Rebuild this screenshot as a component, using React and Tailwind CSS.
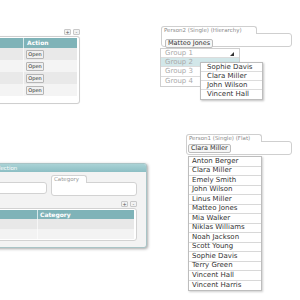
const font = { fontFamily: '"DejaVu Sans", Verdana, sans-serif' };

const people = [
  "Anton Berger",
  "Clara Miller",
  "Emely Smith",
  "John Wilson",
  "Linus Miller",
  "Matteo Jones",
  "Mia Walker",
  "Niklas Williams",
  "Noah Jackson",
  "Scott Young",
  "Sophie Davis",
  "Terry Green",
  "Vincent Hall",
  "Vincent Harris",
];

function PlusMinus() {
  return (
    <div className="flex justify-end gap-[2px]">
      <div className="flex h-[6px] w-[7px] items-center justify-center rounded-[1px] border border-[#c8c8c8] bg-[#f2f2f2] text-[5px] leading-none text-[#555]">
        +
      </div>
      <div className="flex h-[6px] w-[7px] items-center justify-center rounded-[1px] border border-[#c8c8c8] bg-[#f2f2f2] text-[5px] leading-none text-[#555]">
        -
      </div>
    </div>
  );
}

function Chip({ children }) {
  return (
    <div className="inline-flex h-[9px] items-center rounded-[2px] border border-[#bdbdbd] bg-[#f6f6f6] px-[2px] text-[6.5px] leading-none text-[#333]">
      {children}
    </div>
  );
}

function TabBox({ label, tabWidth, children }) {
  return (
    <div>
      <div
        className="relative z-10 -mb-px h-[8px] rounded-t-[3px] border border-b-0 border-[#cfcfcf] bg-white pl-[2px] text-[5.5px] leading-[7px] text-[#8a8a8a]"
        style={{ width: tabWidth }}
      >
        {label}
      </div>
      <div className="flex h-[14px] items-center rounded-b-[3px] rounded-tr-[3px] border border-[#cfcfcf] bg-white px-[1px]">
        {children}
      </div>
    </div>
  );
}

export default function App() {
  return (
    <div className="relative h-[300px] w-[300px] overflow-hidden bg-white" style={font}>
      {/* table with action column */}
      <div className="absolute left-[-40px] top-[29px] w-[120px]">
        <PlusMinus />
        <div className="mt-[1px] rounded-[3px] border border-[#cfcfcf] bg-white px-[2px] pb-[7px] pt-[1px] shadow-[0_0_1px_rgba(0,0,0,0.1)]">
          <div className="grid h-[10px] grid-cols-[61px_1fr] bg-[#7fb3b8] text-[6px] font-bold leading-[10px] text-white">
            <div className="border-r border-[#d6e8ea]" />
            <div className="pl-[3px]">Action</div>
          </div>
          {[0, 1, 2, 3].map((i) => (
            <div
              key={i}
              className={`grid h-[12px] grid-cols-[61px_1fr] items-center ${
                i % 2 === 0 ? "bg-[#e9e9e9]" : "bg-[#f4f4f4]"
              }`}
            >
              <div className="h-full border-r border-[#f8f8f8]" />
              <div className="pl-[2px]">
                <div className="flex h-[9px] w-[18px] items-center justify-center rounded-[1px] border border-[#b5b5b5] bg-[#f0f0f0] text-[5px] leading-none text-[#222]">
                  Open
                </div>
              </div>
            </div>
          ))}
        </div>
      </div>

      {/* hierarchy select */}
      <div className="absolute left-[161px] top-[26px] w-[131px]">
        <TabBox label="Person2 (Single) (Hierarchy)" tabWidth={96}>
          <div className="pl-[2px]">
            <Chip>Matteo Jones</Chip>
          </div>
        </TabBox>
      </div>
      <div className="absolute left-[160px] top-[48px] w-[80px] border border-[#cfcfcf] bg-white text-[7px] leading-none text-[#aaa]">
        {["Group 1", "Group 2", "Group 3", "Group 4"].map((g, i) => (
          <div
            key={g}
            className={`relative flex h-[9.2px] items-center border-b border-[#dcdcdc] pl-[4px] last:border-b-0 ${
              i === 1 ? "bg-[#d2e7e9]" : ""
            }`}
          >
            {g}
            {i === 0 && (
              <svg className="absolute right-[5px] top-[3px]" width="4" height="4" viewBox="0 0 4 4">
                <path d="M4 0V4H0Z" fill="#333" />
              </svg>
            )}
          </div>
        ))}
      </div>
      <div className="absolute left-[200px] top-[62px] w-[63px] border border-[#bdbdbd] bg-white text-[7px] leading-none text-[#333] shadow-[1px_1px_2px_rgba(0,0,0,0.25)]">
        {["Sophie Davis", "Clara Miller", "John Wilson", "Vincent Hall"].map((n) => (
          <div key={n} className="flex h-[9px] items-center border-b border-[#dcdcdc] pl-[6px] last:border-b-0">
            {n}
          </div>
        ))}
      </div>

      {/* selection window */}
      <div className="absolute left-[-60px] top-[163px] w-[207px] rounded-[3px] border border-[#a9c4c6] bg-[#f3f3f3] shadow-[1px_1px_3px_rgba(0,0,0,0.35)]">
        <div className="h-[8px] rounded-t-[2px] bg-gradient-to-b from-[#aad3d6] to-[#8dbfc4] pl-[51px] text-[5.5px] leading-[8px] text-white">
          Selection
        </div>
        <div className="pb-[6px] pl-[6px] pr-[9px] pt-[3px]">
          <div className="flex gap-[4px]">
            <div className="mt-[7px] h-[12px] flex-1 rounded-[3px] border border-[#d2d2d2] bg-white" />
            <div className="w-[86px]">
              <div className="relative z-10 -mb-px h-[8px] w-[36px] rounded-t-[3px] border border-b-0 border-[#d2d2d2] bg-white pl-[2px] text-[5.5px] leading-[7px] text-[#999]">
                Category
              </div>
              <div className="h-[14px] rounded-b-[3px] rounded-tr-[3px] border border-[#d2d2d2] bg-white" />
            </div>
          </div>
          <div className="mt-[5px]">
            <PlusMinus />
          </div>
          <div className="mt-[1px] rounded-[3px] border border-[#d2d2d2] bg-white px-[2px] pb-[1px] pt-[1px]">
            <div className="grid h-[9px] grid-cols-[88px_1fr] bg-[#7fb3b8] text-[6px] font-bold leading-[9px] text-white">
              <div className="border-r border-[#d6e8ea]" />
              <div className="pl-[2px]">Category</div>
            </div>
            <div className="grid h-[10px] grid-cols-[88px_1fr] bg-[#e8e8e8]">
              <div className="border-r border-[#f6f6f6]" />
              <div />
            </div>
            <div className="grid h-[10px] grid-cols-[88px_1fr] bg-[#f3f3f3]">
              <div className="border-r border-[#fafafa]" />
              <div />
            </div>
          </div>
        </div>
      </div>

      {/* flat select */}
      <div className="absolute left-[186px] top-[134px] w-[106px]">
        <TabBox label="Person1 (Single) (Flat)" tabWidth={76}>
          <Chip>Clara Miller</Chip>
        </TabBox>
      </div>
      <div className="absolute left-[188px] top-[156px] w-[74px] border border-[#bdbdbd] bg-white text-[7px] leading-none text-[#333] shadow-[1px_1px_2px_rgba(0,0,0,0.2)]">
        {people.map((n) => (
          <div key={n} className="flex h-[9.5px] items-center border-b border-[#d8d8d8] pl-[3px] last:border-b-0">
            {n}
          </div>
        ))}
      </div>
    </div>
  );
}
